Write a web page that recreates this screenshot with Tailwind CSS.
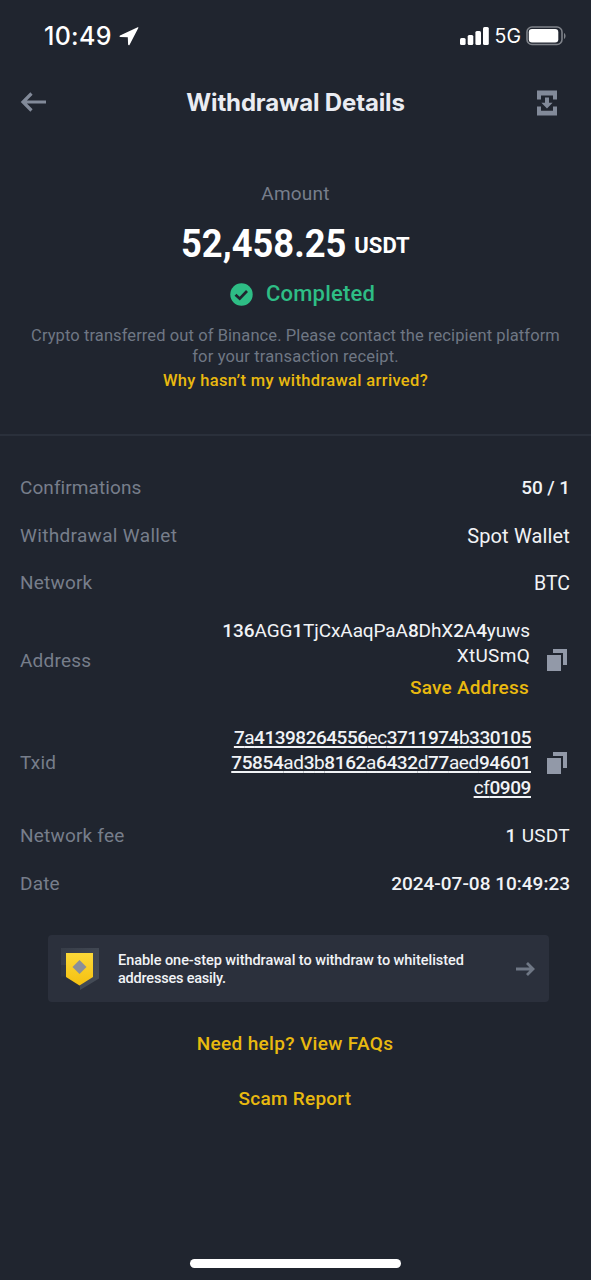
<!DOCTYPE html>
<html lang="en">
<head>
<meta charset="utf-8">
<title>Withdrawal Details</title>
<script src="https://cdn.jsdelivr.net/npm/@tailwindcss/browser@4"></script>
</head>
<body class="bg-[#20252f]">
<main class="flex h-[1280px] w-[591px] flex-col overflow-hidden bg-[#20252f] font-['Roboto','Noto_Sans',sans-serif] text-[#f1f3f6]">

  <div class="flex h-[72px] shrink-0 items-center justify-between pl-[44px] pr-[25px] text-white">
    <div class="flex items-center gap-[7px]">
      <span class="w-[68px] whitespace-nowrap font-['Inter',sans-serif] text-[25px] font-medium leading-7 tracking-[0.3px]">10:49</span>
      <svg class="h-5 w-5" viewBox="0 0 20 20" fill="currentColor"><path d="M18.700 1.200 1 9.600c-.8.500-.6 1.500.3 1.500l7.500.1.300 7.300c.1.900 1.100 1.100 1.500.3L19.300 2c.300-.6-.1-1-.6-.8z"/></svg>
    </div>
    <div class="flex items-center">
      <svg class="h-5 w-[30px]" viewBox="0 0 30 20" fill="currentColor"><rect x="0" y="12" width="5.600" height="7" rx="1.500"/><rect x="7.700" y="9" width="5.600" height="10" rx="1.500"/><rect x="15.400" y="5" width="5.600" height="14" rx="1.500"/><rect x="23" y="1" width="5.800" height="18" rx="1.500"/></svg>
      <span class="ml-[5px] font-['Inter',sans-serif] text-[19.500px] font-normal leading-6">5G</span>
      <svg class="ml-[5px] h-5 w-10" viewBox="0 0 40 20"><rect x="1" y="1" width="35" height="17.500" rx="5" fill="none" stroke="#7f838a" stroke-width="1.600"/><rect x="2.800" y="3" width="29.500" height="13.500" rx="3.200" fill="#fff"/><path d="M38 7v6c2-1 2-5 0-6z" fill="#7f838a"/></svg>
    </div>
  </div>

  <header class="flex h-[62px] shrink-0 items-center justify-between pl-5 pr-[32px] text-[#828a99]">
    <svg class="mb-0.5 h-6 w-7" viewBox="0 0 28 24" fill="none" stroke="currentColor" stroke-width="3.200"><path d="M26 12H3M11.500 3.500 3 12l8.500 8.500"/></svg>
    <h1 class="ml-2 font-['Inter',sans-serif] text-[24px] font-bold leading-7 tracking-[-0.150px] text-[#eaecf2]">Withdrawal Details</h1>
    <svg class="h-[26px] w-[24px]" viewBox="0 0 24 26" fill="currentColor"><path d="M2 .5h20v9h-4v-4H6v4H2zM2 16.500h4v4.200h12v-4.200h4v9H2zM10 7.500h4v5.300h3.600L12 18.500l-5.600-5.700H10z"/></svg>
  </header>

  <section class="flex h-[302px] shrink-0 flex-col items-center border-b-2 border-[#2a303b] pt-[48px]">
    <p class="text-[19px] leading-6 tracking-[0.200px] text-[#777e8b]">Amount</p>
    <p class="mt-[16px] flex h-[44px] items-start gap-[8px] font-bold text-white"><span class="w-[165px] origin-left scale-x-[0.920] whitespace-nowrap text-[39.500px] leading-[44px]">52,458.25</span><span class="pt-[9px] text-[22px] leading-[30px]">USDT</span></p>
    <div class="ml-[14px] mt-[14px] flex items-center gap-[13px] text-[#2ebd85]">
      <svg class="h-[23px] w-[23px]" viewBox="0 0 23 23"><circle cx="11.500" cy="11.500" r="11.200" fill="currentColor"/><path d="m5.500 11.700 4.200 4L17 8" fill="none" stroke="#20252f" stroke-width="2.700"/></svg>
      <span class="text-[22px] font-medium leading-7 tracking-[0.200px]">Completed</span>
    </div>
    <p class="mt-[17px] whitespace-nowrap text-center text-[16.500px] leading-[21px] tracking-[0.090px] text-[#6f7784]">Crypto transferred out of Binance. Please contact the recipient platform<br><span class="tracking-[0.150px]">for your transaction receipt.</span></p>
    <p class="mt-1 text-[16.500px] font-medium leading-5 tracking-[0.340px] text-[#e9b90f]">Why hasn’t my withdrawal arrived?</p>
  </section>

  <dl class="mt-[27px] flex shrink-0 flex-col pl-5 pr-[21px] text-[19px] leading-[25px] [&_dt]:tracking-[0.200px] [&_dt]:text-[#777e8b]">
    <div class="flex h-12 items-center justify-between"><dt><span class="tracking-[0.080px]">Confirmations</span></dt><dd class="font-medium tracking-[-0.100px]">50 / 1</dd></div>
    <div class="flex h-12 items-center justify-between"><dt><span class="tracking-[0.330px]">Withdrawal Wallet</span></dt><dd class="pt-0.5 text-[20px] tracking-[0.150px]">Spot Wallet</dd></div>
    <div class="flex h-[47px] items-center justify-between"><dt>Network</dt><dd class="pt-0.5 text-[19.500px]">BTC</dd></div>
    <div class="flex h-[108px] items-center justify-between">
      <dt>Address</dt>
      <dd class="flex items-center gap-4">
        <div class="flex flex-col items-end pb-[3px]">
          <span class="tracking-[-0.100px]"><b class="font-medium">136</b>AGG<b class="font-medium">1</b>TjCxAaqPaA<b class="font-medium">8</b>DhX<b class="font-medium">2</b>A<b class="font-medium">4</b>yuws</span>
          <span class="tracking-[0.300px]">XtUSmQ</span>
          <a class="mr-px mt-[7px] font-medium tracking-[0.250px] text-[#e9b90f]">Save Address</a>
        </div>
        <svg class="h-6 w-6" viewBox="0 0 24 24" fill="#9299a8"><path d="M1 7h14v16H1zM7 1h14v16h-4V5H7z"/></svg>
      </dd>
    </div>
    <div class="flex h-[97px] items-center justify-between">
      <dt>Txid</dt>
      <dd class="flex items-center gap-4">
        <div class="-mr-px flex flex-col items-end underline decoration-2 underline-offset-2">
          <span class="tracking-[-0.480px]"><b class="font-medium">7</b>a<b class="font-medium">41398264556</b>ec<b class="font-medium">3711974</b>b<b class="font-medium">330105</b></span>
          <span class="tracking-[-0.380px]"><b class="font-medium">75854</b>ad<b class="font-medium">3</b>b<b class="font-medium">8162</b>a<b class="font-medium">6432</b>d<b class="font-medium">77</b>aed<b class="font-medium">94601</b></span>
          <span class="tracking-[-0.400px]">cf<b class="font-medium">0909</b></span>
        </div>
        <svg class="h-6 w-6" viewBox="0 0 24 24" fill="#9299a8"><path d="M1 7h14v16H1zM7 1h14v16h-4V5H7z"/></svg>
      </dd>
    </div>
    <div class="flex h-12 items-center justify-between"><dt>Network fee</dt><dd class="tracking-[0.300px]"><b class="font-medium">1</b> USDT</dd></div>
    <div class="flex h-12 items-center justify-between"><dt>Date</dt><dd class="font-medium">2024-07-08 10:49:23</dd></div>
  </dl>

  <div class="ml-12 mt-[28px] flex h-[67px] w-[501px] shrink-0 items-center rounded bg-[#2b303c] pl-3 pr-[14px]">
    <svg class="h-11 w-10" viewBox="0 0 40 44">
      <defs><linearGradient id="gold" x1="0" y1="0" x2="0" y2="1"><stop offset="0" stop-color="#fcd938"/><stop offset="1" stop-color="#f5c010"/></linearGradient><linearGradient id="shade" x1="0" y1="0" x2="1" y2="0.600"><stop offset="0" stop-color="#373d48"/><stop offset="1" stop-color="#444b56"/></linearGradient></defs>
      <path d="M1 1h38v30.500L20 43V38L1 30z" fill="url(#shade)"/><path d="M1 18h5v14H1z" fill="#2b303c" fill-opacity=".6"/><path d="M1 29.500h5L20 38.500V43z" fill="#2b303c"/><path d="M6 6h27v24L19.500 38.500 6 30z" fill="url(#gold)"/><path d="m19.500 13 7 7-7 7-7-7z" fill="#8a8f99"/>
    </svg>
    <p class="ml-[18px] flex-1 whitespace-nowrap pt-0.5 text-[14.500px] font-medium leading-[18px] tracking-[-0.050px]">Enable one-step withdrawal to withdraw to whitelisted<br><span class="tracking-[-0.200px]">addresses easily.</span></p>
    <svg class="h-5 w-5" viewBox="0 0 20 20" fill="none" stroke="#6f7785" stroke-width="2.800"><path d="M1 10h17M12 4l6 6-6 6"/></svg>
  </div>

  <nav class="mt-[29px] flex shrink-0 flex-col items-center gap-[30px] pr-px text-[19px] font-medium leading-[25px] text-[#e9b90f]">
    <a class="tracking-[0.350px]">Need help? View FAQs</a>
    <a class="tracking-[0.250px]">Scam Report</a>
  </nav>
  <div class="mx-auto mb-3 mt-auto h-[9px] w-[211px] shrink-0 rounded-full bg-white"></div>
</main>
</body>
</html>
